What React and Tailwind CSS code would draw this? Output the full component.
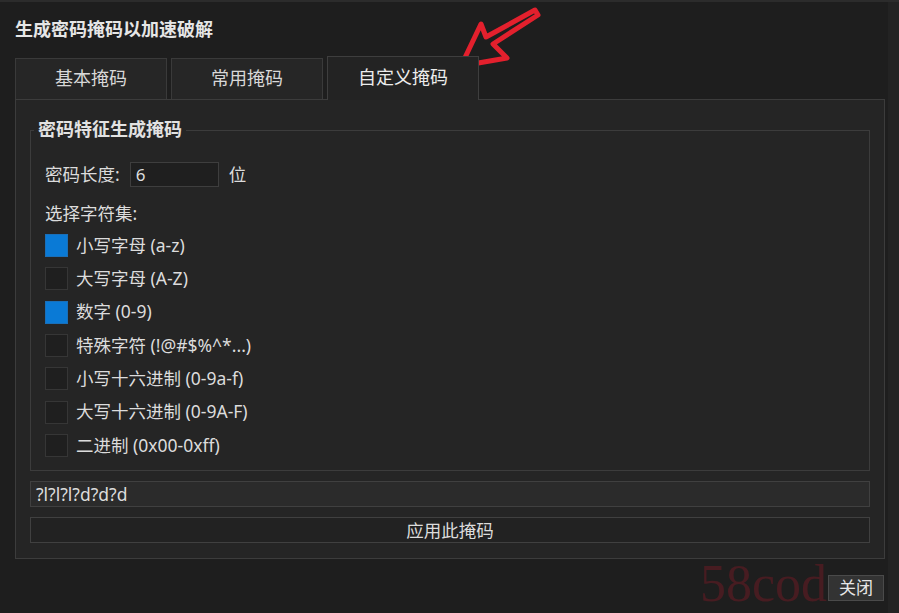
import React from "react";

const font = { fontFamily: '"Noto Sans", "Noto Sans CJK SC", sans-serif' };

function Check({ checked, label }) {
  return (
    <div className="flex items-center h-[33.3px]">
      <div
        className={
          checked
            ? "w-[23px] h-[23px] bg-[#0a7ad6] border border-[#1a6fb8]"
            : "w-[23px] h-[23px] bg-[#1f1f1f] border border-[#363636]"
        }
      />
      <span className="ml-[8px] text-[17.5px] text-[#dcdcdc] leading-none">{label}</span>
    </div>
  );
}

export default function App() {
  return (
    <div
      className="relative w-[899px] h-[613px] bg-[#1e1e1e] border-t-2 border-[#2c2c2c] overflow-hidden"
      style={font}
    >
      <div className="absolute right-0 top-0 w-[11px] h-full bg-[#232323]" />
      <div className="pl-[15px] pr-[15px] pt-[16px]">
        <div className="text-[18px] font-bold text-[#e6e6e6] leading-[22px]">
          生成密码掩码以加速破解
        </div>

        <div className="flex items-end gap-[4px] mt-[17px] h-[42px]">
          <div className="w-[152px] h-[41px] bg-[#262626] border border-[#3a3a3a] border-b-0 flex items-center justify-center text-[18px] text-[#d8d8d8] pb-[2px]">
            基本掩码
          </div>
          <div className="w-[152px] h-[41px] bg-[#262626] border border-[#3a3a3a] border-b-0 flex items-center justify-center text-[18px] text-[#d8d8d8] pb-[2px]">
            常用掩码
          </div>
          <div className="relative z-10 w-[152px] h-[44px] -mb-[1px] bg-[#232323] border border-[#3e3e3e] border-b-0 flex items-center justify-center text-[18px] text-[#ececec] pb-[2px]">
            自定义掩码
          </div>
        </div>

        <div className="w-[870px] h-[460px] bg-[#252525] border border-[#3c3c3c] px-[14px] pt-[21px]">
          <div className="relative w-[840px] h-[341px] border border-[#3c3c3c] mt-[9px]">
            <div className="absolute -top-[14px] left-[3px] px-[4px] bg-[#252525] text-[18px] font-bold text-[#e2e2e2] leading-[24px]">
              密码特征生成掩码
            </div>
            <div className="pl-[14px] pt-[31px]">
              <div className="flex items-center h-[25px]">
                <span className="text-[17.5px] text-[#dcdcdc]">密码长度:</span>
                <div className="ml-[10px] w-[89px] h-[25px] bg-[#1f1f1f] border border-[#3e3e3e] flex items-center pl-[5px] text-[17px] text-[#dcdcdc]">
                  6
                </div>
                <span className="ml-[10px] text-[17.5px] text-[#dcdcdc]">位</span>
              </div>
              <div className="mt-[14px] h-[24px] flex items-center text-[17.5px] text-[#dcdcdc]">
                选择字符集:
              </div>
              <div className="mt-[4px]">
                <Check checked label="小写字母 (a-z)" />
                <Check label="大写字母 (A-Z)" />
                <Check checked label="数字 (0-9)" />
                <Check label="特殊字符 (!@#$%^*...)" />
                <Check label="小写十六进制 (0-9a-f)" />
                <Check label="大写十六进制 (0-9A-F)" />
                <Check label="二进制 (0x00-0xff)" />
              </div>
            </div>
          </div>

          <div className="mt-[10px] w-[840px] h-[26px] bg-[#2b2b2b] border border-[#404040] flex items-center pl-[5px] text-[17.5px] text-[#dcdcdc]">
            ?l?l?l?d?d?d
          </div>
          <div className="mt-[10px] w-[840px] h-[26px] bg-[#222222] border border-[#404040] flex items-center justify-center text-[17.5px] text-[#dcdcdc]">
            应用此掩码
          </div>
        </div>

        <div className="flex justify-end mt-[16px]">
          <div className="relative z-10 w-[56px] h-[26px] bg-[#333333] border border-[#4a4a4a] flex items-center justify-center text-[17px] text-[#e6e6e6]">
            关闭
          </div>
        </div>
      </div>

      <div
        className="absolute left-[700px] top-[556px] text-[52px] leading-none text-[#7a1a26] opacity-45"
        style={{ fontFamily: '"Liberation Serif", serif' }}
      >
        58cod
      </div>

      <svg className="absolute left-0 top-0" width="899" height="613" viewBox="0 0 899 613">
        <polygon
          points="461,64 481,22 486,35 535,8 538,13 493,42 507,56"
          fill="none"
          stroke="#e3202d"
          strokeWidth="5"
          strokeLinejoin="round"
        />
      </svg>
    </div>
  );
}
